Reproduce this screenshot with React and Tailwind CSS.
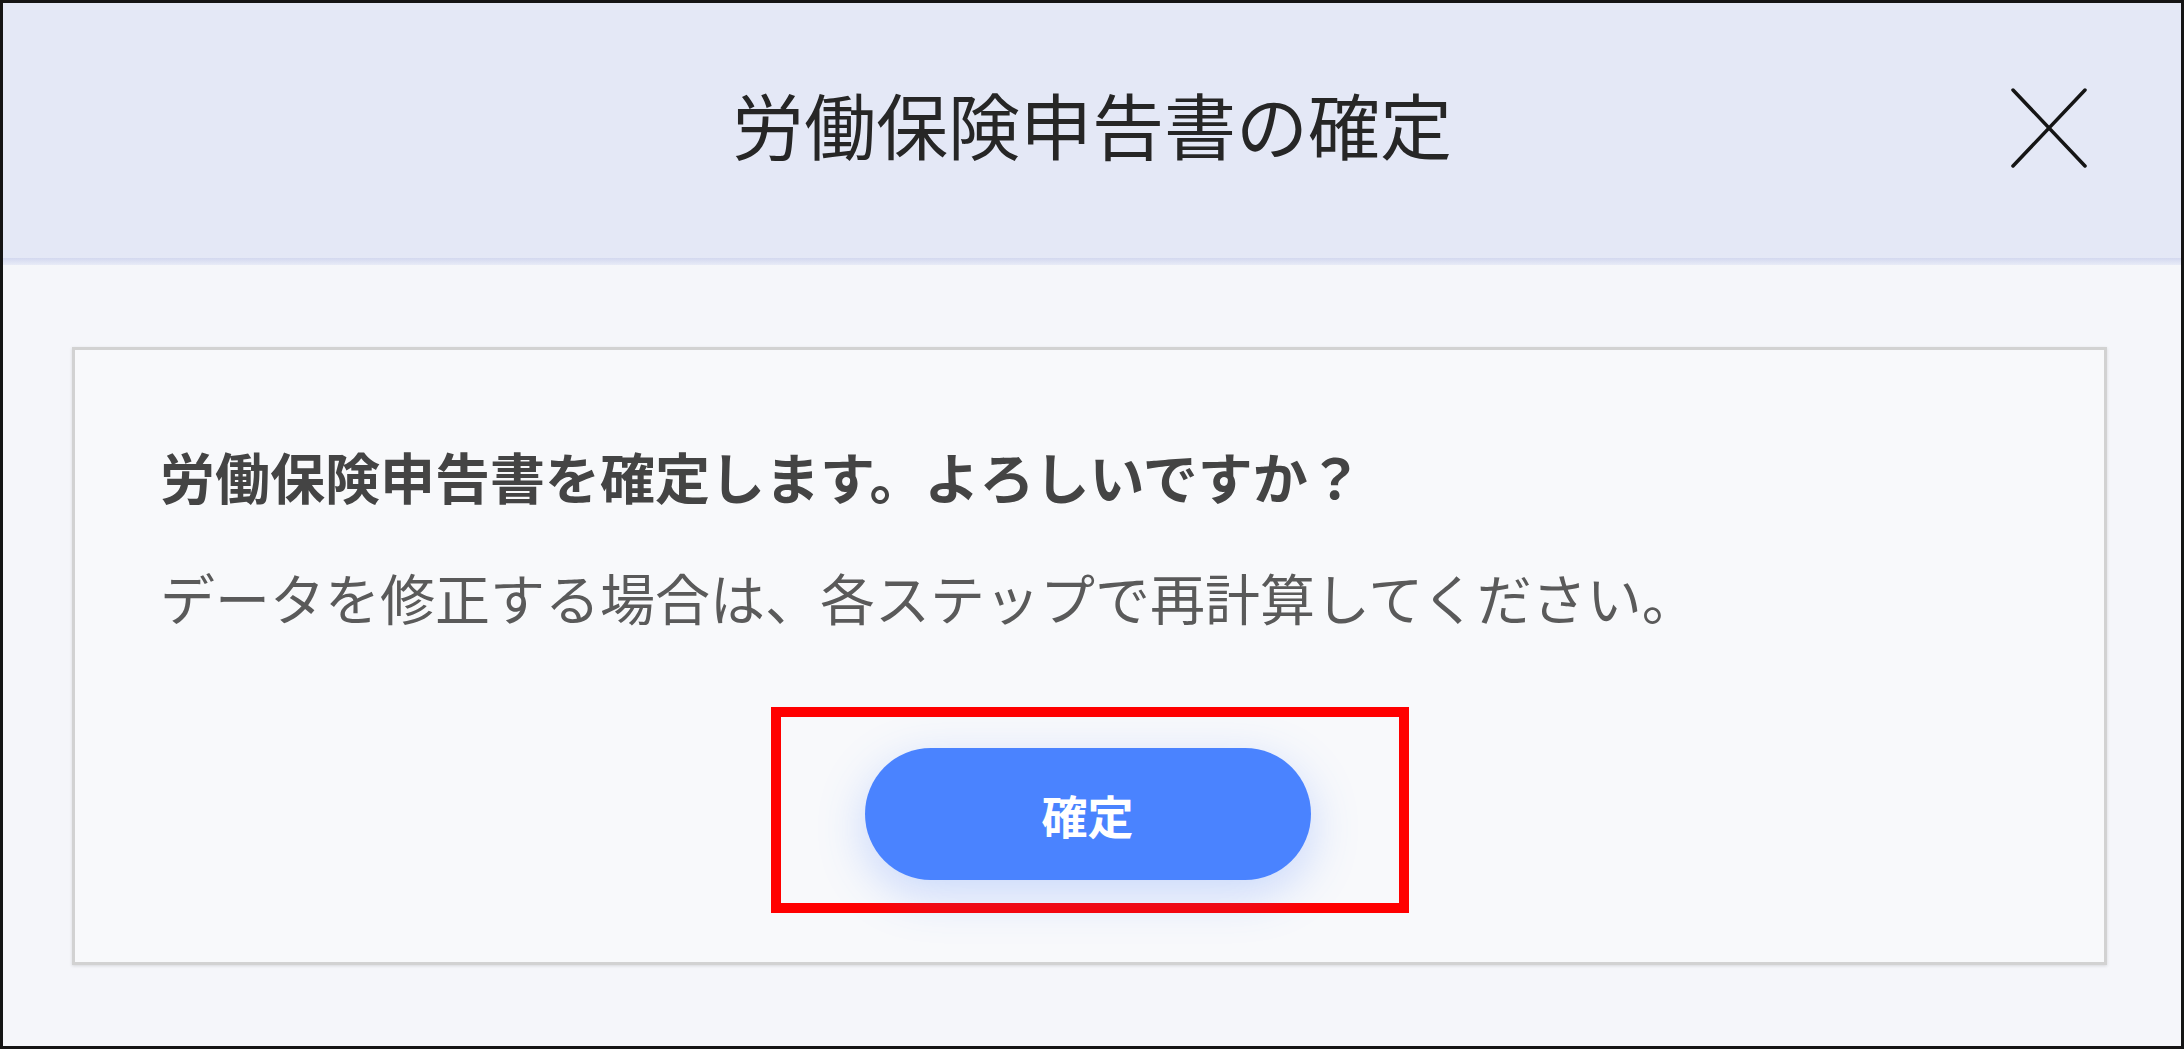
import React from "react";

const jp = { fontFamily: '"Noto Sans CJK JP", "Noto Sans", sans-serif' };

function CloseIcon() {
  return (
    <svg width="76" height="80" viewBox="0 0 76 80" fill="none">
      <path
        d="M2 2 L74 78 M74 2 L2 78"
        stroke="#151515"
        strokeWidth="3.5"
        strokeLinecap="round"
      />
    </svg>
  );
}

export default function App() {
  return (
    <div
      className="w-[2184px] h-[1049px] border-[3px] border-[#141414] bg-[#f5f6fa] flex flex-col overflow-hidden"
      style={jp}
    >
      {/* header */}
      <div className="h-[255px] bg-[#e4e8f6] grid grid-cols-[1fr_auto_1fr] items-center">
        <div />
        <h1 className="pb-[15px] text-[72px] leading-[72px] font-normal text-[#262626] whitespace-nowrap">
          労働保険申告書の確定
        </h1>
        <div className="justify-self-end mr-[94px] pb-[6px] flex">
          <CloseIcon />
        </div>
      </div>
      <div className="h-[7px] bg-linear-to-b from-[#d3d8ef] to-[#e8ebf7]" />

      {/* body */}
      <div className="flex-1 pt-[82px] pb-[81px] pl-[69px] pr-[74px]">
        <div className="h-[618px] bg-[#f8f9fb] border-[3px] border-[#d2d2d2] shadow-[0_1px_3px_rgba(0,0,0,0.12)] pt-[90px] pl-[85px] flex flex-col">
          <p className="text-[55px] leading-[70px] font-bold text-[#444444] whitespace-nowrap">
            労働保険申告書を確定します。よろしいですか？
          </p>
          <p className="mt-[51px] text-[55px] leading-[70px] font-normal text-[#5a5a5a] whitespace-nowrap">
            データを修正する場合は、各ステップで再計算してください。
          </p>

          <div className="mt-[76px] flex justify-center pr-[85px]">
            <div className="border-[10px] border-[#ff0000] pl-[84px] pr-[88px] pt-[31px] pb-[23px]">
              <button className="w-[446px] h-[132px] rounded-full bg-[#4a83ff] text-white text-[46px] font-bold shadow-[0_14px_48px_rgba(74,131,255,0.28)] flex items-center justify-center">
                確定
              </button>
            </div>
          </div>
        </div>
      </div>
    </div>
  );
}
